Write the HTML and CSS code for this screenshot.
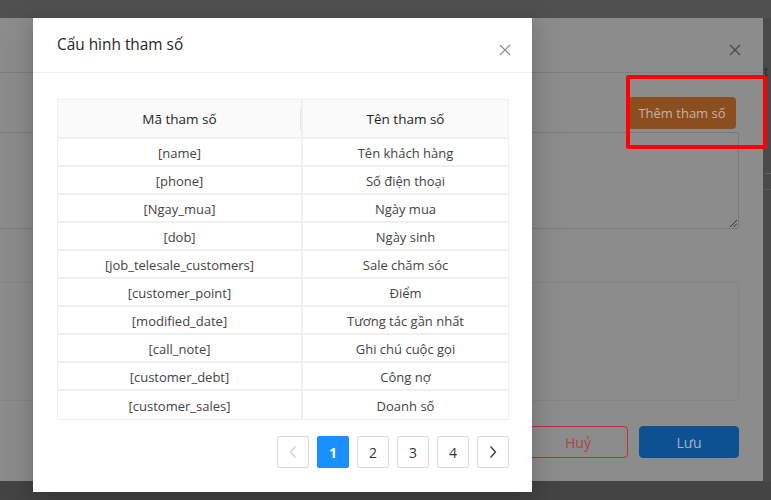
FILE: index.html
```html
<!DOCTYPE html>
<html lang="vi">
<head>
<meta charset="utf-8">
<title>Cấu hình tham số</title>
<link rel="stylesheet" href="styles.css">
</head>
<body>
<div class="page">
  <div class="side-bits">
    <span class="side-t">t</span>
    <span class="side-dash"></span>
    <span class="side-line"></span>
  </div>

  <div class="bg-modal">
    <div class="bg-header">
      <svg class="bg-close" width="12" height="12" viewBox="0 0 12 12"><path d="M1 1L11 11M11 1L1 11" stroke="#4a4a4a" stroke-width="1.3" fill="none"/></svg>
    </div>
    <div class="bg-body">
      <div class="bg-toolbar"><button class="btn-add">Thêm tham số</button></div>
      <div class="bg-textarea">
        <svg class="resize" width="8" height="8" viewBox="0 0 8 8"><path d="M1 8L8 1M4.5 8L8 4.5" stroke="#333" stroke-width="1" fill="none"/></svg>
      </div>
      <div class="bg-box"></div>
      <div class="bg-footer">
        <button class="btn-cancel">Huỷ</button>
        <button class="btn-save">Lưu</button>
      </div>
    </div>
  </div>

  <div class="modal">
    <div class="modal-header">
      <div class="modal-title">Cấu hình tham số</div>
      <svg class="modal-close" width="12" height="12" viewBox="0 0 12 12"><path d="M1 1L11 11M11 1L1 11" stroke="#8c8c8c" stroke-width="1.2" fill="none"/></svg>
    </div>
    <div class="modal-body">
      <table class="params">
        <thead>
          <tr><th class="col-code">Mã tham số</th><th>Tên tham số</th></tr>
        </thead>
        <tbody>
          <tr><td>[name]</td><td>Tên khách hàng</td></tr>
          <tr><td>[phone]</td><td>Số điện thoại</td></tr>
          <tr><td>[Ngay_mua]</td><td>Ngày mua</td></tr>
          <tr><td>[dob]</td><td>Ngày sinh</td></tr>
          <tr><td>[job_telesale_customers]</td><td>Sale chăm sóc</td></tr>
          <tr><td>[customer_point]</td><td>Điểm</td></tr>
          <tr><td>[modified_date]</td><td>Tương tác gần nhất</td></tr>
          <tr><td>[call_note]</td><td>Ghi chú cuộc gọi</td></tr>
          <tr><td>[customer_debt]</td><td>Công nợ</td></tr>
          <tr><td>[customer_sales]</td><td>Doanh số</td></tr>
        </tbody>
      </table>
      <div class="pagination">
        <span class="page-item disabled"><svg width="10" height="14" viewBox="0 0 10 14"><path d="M7.5 1.5L2.5 7L7.5 12.5" stroke="#d0d0d0" stroke-width="1.3" fill="none"/></svg></span>
        <span class="page-item active">1</span>
        <span class="page-item">2</span>
        <span class="page-item">3</span>
        <span class="page-item">4</span>
        <span class="page-item"><svg width="10" height="14" viewBox="0 0 10 14"><path d="M2.5 1.5L7.5 7L2.5 12.5" stroke="#333" stroke-width="1.3" fill="none"/></svg></span>
      </div>
    </div>
  </div>

  <div class="annotation"></div>
</div>
</body>
</html>
```

FILE: styles.css
```css
* { box-sizing: border-box; }

html, body {
  margin: 0;
  padding: 0;
}

body {
  width: 771px;
  height: 500px;
  overflow: hidden;
  background: #4a4a4a;
  font-family: "Open Sans", "Noto Sans", "Liberation Sans", sans-serif;
  font-size: 14px;
}

.page {
  position: relative;
  width: 771px;
  height: 500px;
  background: linear-gradient(#505050 0, #505050 18px, #4a4a4a 18px, #4a4a4a 481px, #444 481px);
}

/* bits of the page visible at the right edge */
.side-bits {
  position: absolute;
  left: 763px;
  top: 0;
  width: 8px;
  height: 500px;
}
.side-t {
  position: absolute;
  left: 1px;
  top: 62px;
  font-size: 13px;
  color: #2a2a2a;
}
.side-dash {
  position: absolute;
  left: 2px;
  top: 173px;
  width: 6px;
  border-top: 1px dashed #666;
}
.side-line {
  position: absolute;
  left: 0;
  top: 189px;
  width: 8px;
  border-top: 1px solid #5a5a5a;
}

/* dimmed background modal */
.bg-modal {
  position: absolute;
  left: -240px;
  top: 18px;
  width: 1003px;
  height: 463px;
  background: #8c8c8c;
  display: flex;
  flex-direction: column;
}
.bg-header {
  height: 55px;
  border-bottom: 1px solid #7e7e7e;
  display: flex;
  align-items: center;
  justify-content: flex-end;
  padding-right: 22px;
  padding-top: 9px;
}
.bg-body {
  padding: 24px 24px 0 24px;
  display: flex;
  flex-direction: column;
}
.bg-toolbar {
  display: flex;
  justify-content: flex-end;
  padding-right: 3px;
}
.btn-add {
  height: 32px;
  width: 108px;
  border: none;
  border-radius: 4px;
  background: #8b4e1f;
  color: #c6b2a6;
  font-family: inherit;
  font-size: 13px;
  padding: 0;
}
.bg-textarea {
  margin-top: 3px;
  height: 97px;
  border: 1px solid #7a7a7a;
  border-radius: 2px;
  position: relative;
}
.resize {
  position: absolute;
  right: 1px;
  bottom: 1px;
}
.bg-box {
  margin-top: 53px;
  height: 119px;
  border: 1px solid #848484;
  border-radius: 4px;
}
.bg-footer {
  margin-top: 25px;
  display: flex;
  justify-content: flex-end;
  gap: 11px;
}
.btn-cancel, .btn-save {
  width: 100px;
  height: 32px;
  border-radius: 4px;
  font-family: inherit;
  font-size: 14px;
  padding: 0;
}
.btn-cancel {
  background: transparent;
  border: 1px solid #b33636;
  color: #a84646;
}
.btn-save {
  background: #0e5192;
  border: 1px solid #0e5192;
  color: #a3b4c6;
}

/* front modal */
.modal {
  position: absolute;
  left: 33px;
  top: 18px;
  width: 499px;
  height: 474px;
  background: #fff;
  box-shadow: 0 6px 16px rgba(0, 0, 0, 0.14), 0 9px 28px 8px rgba(0, 0, 0, 0.08);
}
.modal-header {
  height: 55px;
  border-bottom: 1px solid #f0f0f0;
  padding: 0 21px 0 24px;
  display: flex;
  align-items: center;
  justify-content: space-between;
}
.modal-title {
  font-size: 15.4px;
  color: #262626;
  line-height: 22px;
  margin-top: 0;
}
.modal-close {
  margin-top: 9px;
}
.modal-body {
  padding: 26px 23px 0 24px;
}

.params {
  width: 452px;
  border-collapse: separate;
  border-spacing: 0;
  border: 1px solid #f0f0f0;
  table-layout: fixed;
}
.params th, .params td {
  text-align: center;
  padding: 0;
  border-bottom: 2px solid #f0f0f0;
}
.params th:first-child, .params td:first-child {
  border-right: 2px solid #f0f0f0;
}
.params tbody tr:last-child td {
  border-bottom: none;
}
.params th {
  height: 39px;
  padding-top: 1px;
  background: #fafafa;
  font-weight: 500;
  color: #262626;
  font-size: 13.5px;
  position: relative;
}
.params th.col-code::after {
  content: "";
  position: absolute;
  right: 0;
  top: 8px;
  height: 22px;
  width: 1px;
  background: #e6e6e6;
}
.col-code {
  width: 245px;
}
.params td {
  height: 28px;
  padding-top: 2px;
  color: #444;
  font-size: 13px;
}

.pagination {
  margin-top: 16px;
  display: flex;
  justify-content: flex-end;
  gap: 8px;
}
.page-item {
  width: 32px;
  height: 32px;
  border: 1px solid #d9d9d9;
  border-radius: 2px;
  display: flex;
  align-items: center;
  justify-content: center;
  color: #333;
  font-size: 14px;
  background: #fff;
}
.page-item.active {
  background: #1890ff;
  border-color: #1890ff;
  color: #fff;
  font-weight: 700;
}

/* red annotation frame */
.annotation {
  position: absolute;
  left: 626px;
  top: 75px;
  width: 141px;
  height: 74px;
  border: 4px solid #ff0000;
  border-radius: 3px;
  z-index: 10;
}
```
